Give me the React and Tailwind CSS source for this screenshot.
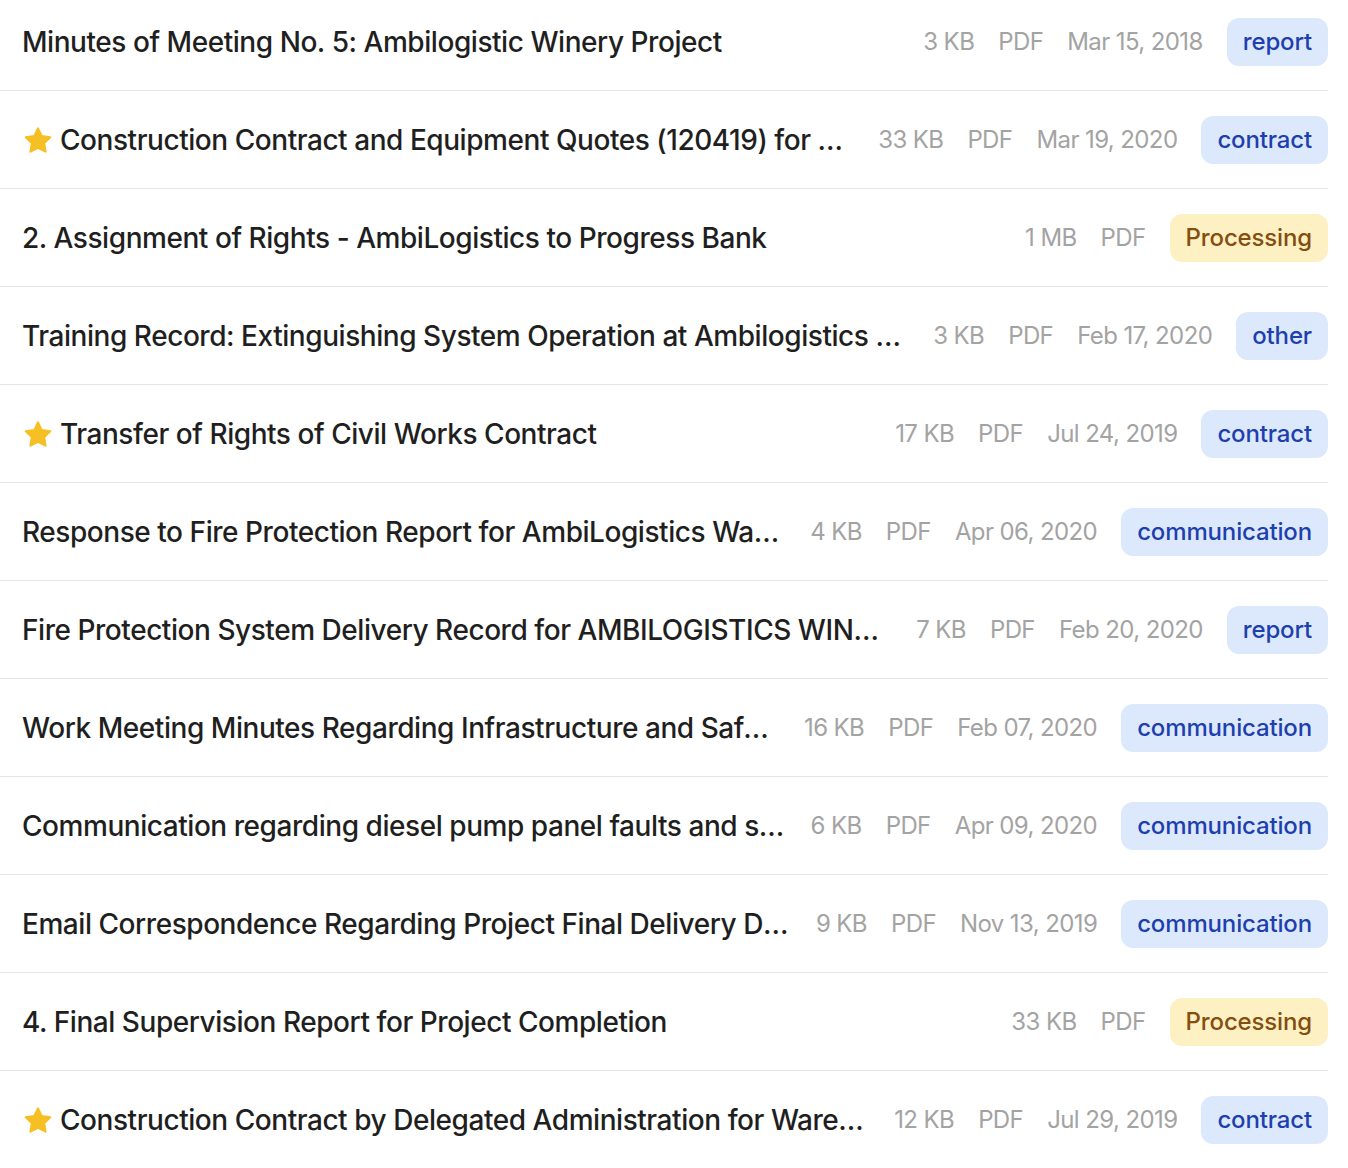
import React from "react";

const docs = [
  { title: "Minutes of Meeting No. 5: Ambilogistic Winery Project", size: "3 KB", date: "Mar 15, 2018", tag: "report" },
  { title: "Construction Contract and Equipment Quotes (120419) for Ambilogistics Winery Warehouse", size: "33 KB", date: "Mar 19, 2020", tag: "contract", starred: true },
  { title: "2. Assignment of Rights - AmbiLogistics to Progress Bank", size: "1 MB", tag: "Processing" },
  { title: "Training Record: Extinguishing System Operation at Ambilogistics Winery", size: "3 KB", date: "Feb 17, 2020", tag: "other" },
  { title: "Transfer of Rights of Civil Works Contract", size: "17 KB", date: "Jul 24, 2019", tag: "contract", starred: true },
  { title: "Response to Fire Protection Report for AmbiLogistics Warehouse", size: "4 KB", date: "Apr 06, 2020", tag: "communication" },
  { title: "Fire Protection System Delivery Record for AMBILOGISTICS WINERY", size: "7 KB", date: "Feb 20, 2020", tag: "report" },
  { title: "Work Meeting Minutes Regarding Infrastructure and Safety Works", size: "16 KB", date: "Feb 07, 2020", tag: "communication" },
  { title: "Communication regarding diesel pump panel faults and solutions", size: "6 KB", date: "Apr 09, 2020", tag: "communication" },
  { title: "Email Correspondence Regarding Project Final Delivery Documents", size: "9 KB", date: "Nov 13, 2019", tag: "communication" },
  { title: "4. Final Supervision Report for Project Completion", size: "33 KB", tag: "Processing" },
  { title: "Construction Contract by Delegated Administration for Warehouse Works", size: "12 KB", date: "Jul 29, 2019", tag: "contract", starred: true },
];

function StarIcon() {
  return (
    <svg width="32" height="32" viewBox="0 0 24 24" className="mt-[2px] shrink-0" aria-hidden="true">
      <path
        d="M12 2.6l2.83 5.73 6.33.92-4.58 4.46 1.08 6.3L12 17.04l-5.66 2.97 1.08-6.3L2.84 9.25l6.33-.92L12 2.6z"
        fill="#f6bf24"
        stroke="#f6bf24"
        strokeWidth="1.6"
        strokeLinejoin="round"
      />
    </svg>
  );
}

function Tag({ label }) {
  const processing = label === "Processing";
  return (
    <span
      className={
        processing
          ? "shrink-0 rounded-[12px] bg-[#fdf1c4] px-4 py-1 text-[24px] leading-[40px] font-medium tracking-[-0.15px] text-[#854d0e]"
          : "shrink-0 rounded-[12px] bg-[#dce9fd] px-4 py-1 text-[24px] leading-[40px] font-medium tracking-[-0.15px] text-[#1e3fae]"
      }
    >
      {label}
    </span>
  );
}

function Row({ doc }) {
  return (
    <div className="flex h-[98px] items-center gap-6 border-b border-[#e5e5e5] pl-[22px]">
      <div className="flex min-w-0 flex-1 items-center gap-[6px]">
        {doc.starred && <StarIcon />}
        <span className="truncate text-[28px] font-medium tracking-[-0.45px] text-[#1f1f1f]">{doc.title}</span>
      </div>
      <div className="flex shrink-0 items-center gap-6 text-[24px] tracking-[-0.6px] text-[#a3a3a3]">
        <span>{doc.size}</span>
        <span>PDF</span>
        {doc.date && <span>{doc.date}</span>}
        <Tag label={doc.tag} />
      </div>
    </div>
  );
}

export default function App() {
  return (
    <div className="min-h-screen bg-white" style={{ fontFamily: "Inter, 'Noto Sans', sans-serif" }}>
      <div className="-mt-[7px] mr-[20px]">
        {docs.map((d, i) => (
          <Row key={i} doc={d} />
        ))}
      </div>
    </div>
  );
}
